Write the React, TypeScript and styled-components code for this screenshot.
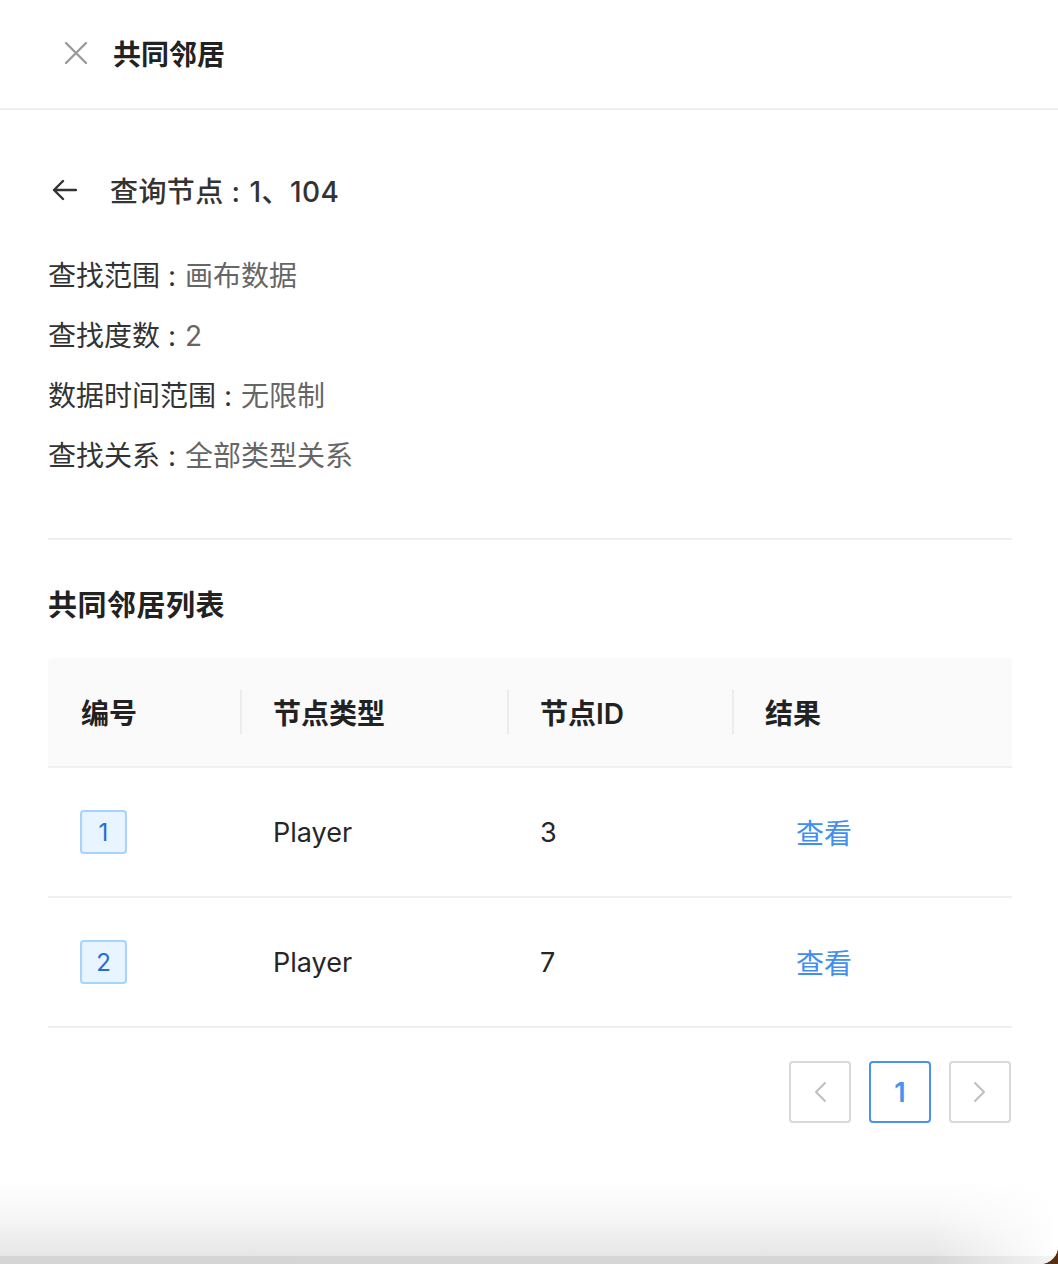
import React from "react";
import styled, { createGlobalStyle } from "styled-components";

const GlobalStyle = createGlobalStyle`
    html, body {
        margin: 0;
        padding: 0;
    }
    body {
        font-family: "Inter", "Noto Sans CJK SC", sans-serif;
        color: #333333;
        background: #5a2c10;
    }
    * {
        box-sizing: border-box;
    }
`;

interface Neighbor {
    id: number;
    type: string;
    nodeId: string;
}

const neighbors: Neighbor[] = [
    { id: 1, type: "Player", nodeId: "3" },
    { id: 2, type: "Player", nodeId: "7" },
];

const infoItems = [
    { label: "查找范围", value: "画布数据" },
    { label: "查找度数", value: "2" },
    { label: "数据时间范围", value: "无限制" },
    { label: "查找关系", value: "全部类型关系" },
];

const columns = [
    { title: "编号", width: 192 },
    { title: "节点类型", width: 267 },
    { title: "节点ID", width: 225 },
    { title: "结果", width: 280 },
];

const CloseIcon = () => (
    <svg width="24" height="24" viewBox="0 0 24 24" fill="none">
        <path d="M2 2L22 22M22 2L2 22" stroke="#9a9a9a" strokeWidth="2.4" strokeLinecap="round" />
    </svg>
);

const BackIcon = () => (
    <svg width="26" height="22" viewBox="0 0 26 22" fill="none">
        <path d="M25 11H3M12 2L3 11L12 20" stroke="#333333" strokeWidth="2.4" strokeLinecap="round" strokeLinejoin="round" />
    </svg>
);

const ChevronIcon = ({ dir }: { dir: "left" | "right" }) => (
    <svg width="16" height="22" viewBox="0 0 16 22" fill="none">
        {dir === "left" ? (
            <path d="M13 2L4 11L13 20" stroke="#bfbfbf" strokeWidth="2" strokeLinecap="round" strokeLinejoin="round" />
        ) : (
            <path d="M3 2L12 11L3 20" stroke="#bfbfbf" strokeWidth="2" strokeLinecap="round" strokeLinejoin="round" />
        )}
    </svg>
);

const App = () => {
    return (
        <>
            <GlobalStyle />
            <Panel>
                <Header>
                    <CloseButton>
                        <CloseIcon />
                    </CloseButton>
                    <HeaderTitle>共同邻居</HeaderTitle>
                </Header>

                <Body>
                    <BackRow>
                        <BackButton>
                            <BackIcon />
                        </BackButton>
                        <QueryTitle>
                            查询节点<Colon>:</Colon>1、104
                        </QueryTitle>
                    </BackRow>

                    <InfoList>
                        {infoItems.map((item) => (
                            <InfoLine key={item.label}>
                                {item.label}
                                <Colon>:</Colon>
                                <InfoValue>{item.value}</InfoValue>
                            </InfoLine>
                        ))}
                    </InfoList>

                    <Divider />

                    <SectionTitle>共同邻居列表</SectionTitle>

                    <Table>
                        <HeadRow>
                            {columns.map((col, i) => (
                                <HeadCell key={col.title} width={col.width} hasSeparator={i > 0}>
                                    {col.title}
                                </HeadCell>
                            ))}
                        </HeadRow>
                        {neighbors.map((row) => (
                            <BodyRow key={row.id}>
                                <Cell width={columns[0].width}>
                                    <IndexBadge>{row.id}</IndexBadge>
                                </Cell>
                                <Cell width={columns[1].width}>{row.type}</Cell>
                                <Cell width={columns[2].width}>{row.nodeId}</Cell>
                                <Cell width={columns[3].width}>
                                    <ViewLink>查看</ViewLink>
                                </Cell>
                            </BodyRow>
                        ))}
                    </Table>

                    <Pagination>
                        <PageButton>
                            <ChevronIcon dir="left" />
                        </PageButton>
                        <PageButton active>1</PageButton>
                        <PageButton>
                            <ChevronIcon dir="right" />
                        </PageButton>
                    </Pagination>
                </Body>

                <BottomFade />
                <BottomStrip />
            </Panel>
        </>
    );
};

const Panel = styled.div`
    display: flex;
    flex-direction: column;
    width: 1058px;
    height: 1264px;
    background: #ffffff;
    border-bottom-right-radius: 18px;
    overflow: hidden;
`;

const Header = styled.div`
    display: flex;
    align-items: center;
    height: 110px;
    padding: 0 0 2px 64px;
    border-bottom: 2px solid #efefef;
    flex-shrink: 0;
`;

const CloseButton = styled.div`
    display: flex;
    align-items: center;
    justify-content: center;
    width: 24px;
    height: 24px;
    margin-right: 25px;
`;

const HeaderTitle = styled.div`
    font-size: 28px;
    font-weight: 600;
    color: #222222;
    font-family: "Noto Sans CJK SC", sans-serif;
`;

const Body = styled.div`
    display: flex;
    flex-direction: column;
    flex: 1;
    padding: 60px 46px 0 48px;
`;

const BackRow = styled.div`
    display: flex;
    align-items: center;
    height: 40px;
`;

const BackButton = styled.div`
    display: flex;
    align-items: center;
    width: 62px;
    padding-left: 3px;
`;

const QueryTitle = styled.div`
    font-size: 28px;
    font-weight: 500;
    color: #333333;
    letter-spacing: 0.4px;
`;

const Colon = styled.span`
    display: inline-block;
    margin: 0 9px 0 8px;
`;

const InfoList = styled.div`
    display: flex;
    flex-direction: column;
    margin-top: 36px;
`;

const InfoLine = styled.div`
    height: 60px;
    line-height: 60px;
    font-size: 28px;
    color: #333333;
`;

const InfoValue = styled.span`
    color: #666666;
`;

const Divider = styled.div`
    height: 2px;
    background: #efefef;
    margin-top: 52px;
`;

const SectionTitle = styled.div`
    height: 40px;
    line-height: 40px;
    margin-top: 46px;
    font-size: 29px;
    font-weight: 600;
    color: #222222;
    letter-spacing: 0.5px;
`;

const Table = styled.div`
    display: flex;
    flex-direction: column;
    margin-top: 32px;
`;

const HeadRow = styled.div`
    display: flex;
    height: 110px;
    background: #fafafa;
    border-bottom: 2px solid #f0f0f0;
    border-radius: 4px 4px 0 0;
`;

const HeadCell = styled.div<{ width: number; hasSeparator: boolean }>`
    position: relative;
    display: flex;
    align-items: center;
    width: ${(p) => p.width}px;
    padding-left: 33px;
    font-size: 28px;
    font-weight: 600;
    color: #222222;

    &::before {
        content: "";
        display: ${(p) => (p.hasSeparator ? "block" : "none")};
        position: absolute;
        left: 0;
        top: 50%;
        width: 2px;
        height: 44px;
        margin-top: -22px;
        background: #ececec;
    }
`;

const BodyRow = styled.div`
    display: flex;
    height: 130px;
    border-bottom: 2px solid #efefef;
`;

const Cell = styled.div<{ width: number }>`
    display: flex;
    align-items: center;
    width: ${(p) => p.width}px;
    padding-left: 33px;
    font-size: 27px;
    color: #262626;
`;

const IndexBadge = styled.div`
    display: flex;
    align-items: center;
    justify-content: center;
    width: 47px;
    height: 44px;
    margin-left: -1px;
    background: #e8f4ff;
    border: 2px solid #a5d4ff;
    border-radius: 4px;
    font-size: 24px;
    color: #1f6fd6;
`;

const ViewLink = styled.span`
    margin-left: 31px;
    font-size: 28px;
    color: #3f8ef0;
    cursor: pointer;
    font-family: "Noto Sans CJK SC", sans-serif;
`;

const Pagination = styled.div`
    display: flex;
    justify-content: flex-end;
    gap: 18px;
    margin-top: 33px;
    padding-right: 1px;
`;

const PageButton = styled.div<{ active?: boolean }>`
    display: flex;
    align-items: center;
    justify-content: center;
    width: 62px;
    height: 62px;
    border: 2px solid ${(p) => (p.active ? "#4a92f2" : "#d9d9d9")};
    border-radius: 4px;
    font-size: 27px;
    font-weight: 600;
    color: #4a92f2;
`;

const BottomFade = styled.div`
    height: 76px;
    flex-shrink: 0;
    background:
        linear-gradient(to right, rgba(255, 255, 255, 0) 88%, #ffffff 100%),
        linear-gradient(to bottom, #ffffff 0%, #f6f6f6 50%, #e6e6e6 100%);
`;

const BottomStrip = styled.div`
    height: 8px;
    flex-shrink: 0;
    background: linear-gradient(to right, #d5d5d5 0%, #d6d6d6 88%, #f2f2f2 99%);
`;

export default App;
